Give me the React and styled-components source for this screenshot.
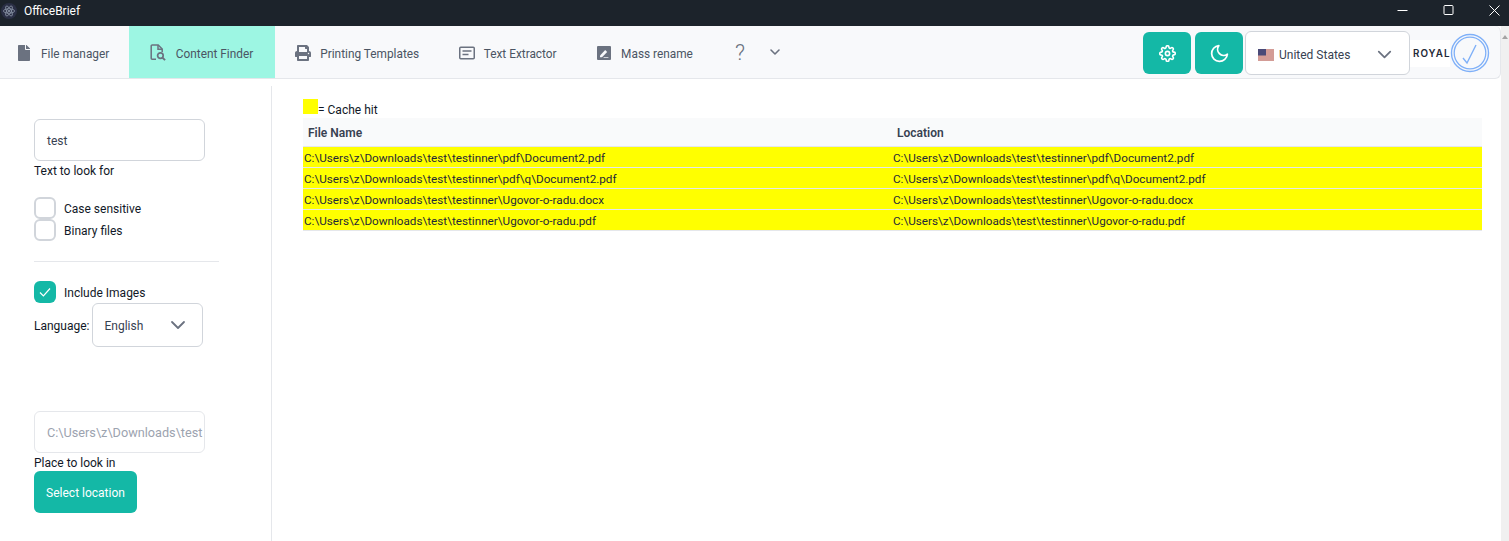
import React from 'react';
import styled, { createGlobalStyle } from 'styled-components';
import { FaFile, FaPrint } from 'react-icons/fa';
import { FiSettings, FiMoon, FiChevronDown } from 'react-icons/fi';

const TABS = [
  { key: 'files', label: 'File manager', icon: <FileIcon /> },
  { key: 'finder', label: 'Content Finder', icon: <FinderIcon />, active: true },
  { key: 'print', label: 'Printing Templates', icon: <FaPrint size={16} /> },
  { key: 'extract', label: 'Text Extractor', icon: <ExtractIcon /> },
  { key: 'rename', label: 'Mass rename', icon: <RenameIcon /> },
];

const FILES = [
  'C:\\Users\\z\\Downloads\\test\\testinner\\pdf\\Document2.pdf',
  'C:\\Users\\z\\Downloads\\test\\testinner\\pdf\\q\\Document2.pdf',
  'C:\\Users\\z\\Downloads\\test\\testinner\\Ugovor-o-radu.docx',
  'C:\\Users\\z\\Downloads\\test\\testinner\\Ugovor-o-radu.pdf',
];

function FileIcon() {
  return <FaFile size={16} />;
}

function FinderIcon() {
  return (
    <svg width="17" height="17" viewBox="0 0 17 17" fill="none" stroke="currentColor" strokeWidth="1.5">
      <path d="M6 15.2H2.2a1 1 0 0 1-1-1V2a1 1 0 0 1 1-1h6l4 4v3" />
      <path d="M8 1v4.2h4.2" />
      <circle cx="10.4" cy="11.6" r="2.8" strokeWidth="1.7" />
      <path d="M12.5 13.7l2.6 2.4" strokeWidth="1.9" />
    </svg>
  );
}

function ExtractIcon() {
  return (
    <svg width="16" height="14" viewBox="0 0 16 14" fill="none" stroke="currentColor">
      <rect x="0.75" y="1.25" width="14.5" height="11.5" rx="1" strokeWidth="1.5" />
      <path d="M3.5 5h9M3.5 8.5h6" strokeWidth="1.5" />
    </svg>
  );
}

function RenameIcon() {
  return (
    <svg width="14" height="14" viewBox="0 0 14 14">
      <rect width="14" height="14" rx="1" fill="currentColor" />
      <path d="M3 9.4L8.2 4l2 2-5.2 5.3H3z" fill="#f8f9fb" />
      <path d="M6.6 11.3H11.4v.7H6.6z" fill="#f8f9fb" />
    </svg>
  );
}

function Flag() {
  return (
    <svg width="16" height="12" viewBox="0 0 16 12">
      <rect width="16" height="12" fill="#f1e4df" />
      <path d="M0 1h16M0 3h16M0 5h16M0 7h16M0 9h16M0 11h16" stroke="#b5544f" strokeWidth="1" />
      <rect width="8" height="6.5" fill="#4a4a78" />
    </svg>
  );
}

function ElectronLogo() {
  return (
    <svg width="16" height="16" viewBox="0 0 16 16" fill="none" stroke="#98a4b4" strokeWidth="0.7">
      <circle cx="8" cy="8" r="8" fill="#2a2f45" stroke="none" />
      <ellipse cx="8" cy="8" rx="5.6" ry="2.2" />
      <ellipse cx="8" cy="8" rx="5.6" ry="2.2" transform="rotate(60 8 8)" />
      <ellipse cx="8" cy="8" rx="5.6" ry="2.2" transform="rotate(120 8 8)" />
      <circle cx="8" cy="8" r="1" fill="#98a4b4" stroke="none" />
    </svg>
  );
}

function RoyalBadge() {
  return (
    <svg width="40" height="40" viewBox="0 0 40 40" fill="none" stroke="#7fb0f8">
      <circle cx="20" cy="20" r="18.5" strokeWidth="1.4" />
      <circle cx="20" cy="20" r="15.8" strokeWidth="1.3" />
      <path d="M13 25l4 5 9-18" strokeWidth="1.4" />
    </svg>
  );
}

const App = () => {
  return (
    <Page>
      <GlobalStyle />
      <TitleBar>
        <TitleLeft>
          <ElectronLogo />
          <span>OfficeBrief</span>
        </TitleLeft>
        <WindowControls>
          <svg aria-label="Minimize" width="11" height="11" viewBox="0 0 11 11" stroke="#fff"><path d="M0.5 5.5h10" /></svg>
          <svg aria-label="Maximize" width="11" height="11" viewBox="0 0 11 11" fill="none" stroke="#fff"><rect x="1" y="0.5" width="9" height="9" rx="1" /></svg>
          <svg aria-label="Close" width="11" height="11" viewBox="0 0 11 11" stroke="#fff"><path d="M0.5 0.5l10 10M10.5 0.5l-10 10" /></svg>
        </WindowControls>
      </TitleBar>

      <Body>
        <Main>
          <NavBar>
            <Tabs>
              {TABS.map(tab => (
                <Tab key={tab.key} $active={tab.active}>
                  <TabIcon>{tab.icon}</TabIcon>
                  {tab.label}
                </Tab>
              ))}
              <HelpMark>?</HelpMark>
              <MoreButton>
                <FiChevronDown size={16} strokeWidth={2.4} />
              </MoreButton>
            </Tabs>
            <NavRight>
              <ActionButton aria-label="Settings">
                <FiSettings size={17} strokeWidth={2.3} />
              </ActionButton>
              <ActionButton aria-label="Dark mode">
                <FiMoon size={21} strokeWidth={2} />
              </ActionButton>
              <CountrySelect>
                <Flag />
                <CountryName>United States</CountryName>
                <FiChevronDown size={23} color="#6b7280" strokeWidth={1.8} />
              </CountrySelect>
              <Brand>
                <BrandName>ROYAL</BrandName>
                <RoyalBadge />
              </Brand>
            </NavRight>
          </NavBar>

          <Content>
            <Sidebar>
              <Field>
                <TextInput>test</TextInput>
                <FieldLabel>Text to look for</FieldLabel>
              </Field>

              <CheckGroup>
                <CheckRow>
                  <Checkbox />
                  <CheckLabel>Case sensitive</CheckLabel>
                </CheckRow>
                <CheckRow>
                  <Checkbox />
                  <CheckLabel>Binary files</CheckLabel>
                </CheckRow>
              </CheckGroup>

              <Divider />

              <CheckRow>
                <Checkbox $checked>
                  <svg width="14" height="14" viewBox="0 0 14 14" fill="none" stroke="#fff" strokeWidth="1.2">
                    <path d="M2 7.5l3.4 3.4L12 3.5" />
                  </svg>
                </Checkbox>
                <CheckLabel>Include Images</CheckLabel>
              </CheckRow>
              <LanguageRow>
                <CheckLabel>Language:</CheckLabel>
                <LanguageSelect>
                  <CheckLabel>English</CheckLabel>
                  <FiChevronDown size={24} color="#6b7280" strokeWidth={1.8} />
                </LanguageSelect>
              </LanguageRow>

              <PlaceField>
                <TextInput $disabled>C:\Users\z\Downloads\test</TextInput>
                <FieldLabel>Place to look in</FieldLabel>
                <SelectButton>Select location</SelectButton>
              </PlaceField>
            </Sidebar>

            <Results>
              <Legend>
                <Swatch />
                <span>= Cache hit</span>
              </Legend>
              <Table>
                <thead>
                  <tr>
                    <HeadCell $wide>File Name</HeadCell>
                    <HeadCell>Location</HeadCell>
                  </tr>
                </thead>
                <tbody>
                  {FILES.map(file => (
                    <tr key={file}>
                      <Cell>{file}</Cell>
                      <Cell>{file}</Cell>
                    </tr>
                  ))}
                </tbody>
              </Table>
            </Results>
          </Content>
        </Main>
        <Scrollbar>
          <ScrollArrow />
        </Scrollbar>
      </Body>
    </Page>
  );
};

export default App;

const GlobalStyle = createGlobalStyle`
  html, body {
    margin: 0;
    height: 100%;
    overflow: hidden;
    background: #fff;
  }
  body {
    font-family: Roboto, 'Noto Sans', sans-serif;
    font-size: 12px;
    color: #111827;
  }
  #root {
    height: 100%;
  }
`;

const Page = styled.div`
  display: flex;
  flex-direction: column;
  height: 541px;
`;

const TitleBar = styled.div`
  display: flex;
  align-items: center;
  justify-content: space-between;
  flex: 0 0 26px;
  box-sizing: border-box;
  padding-bottom: 5px;
  background: #1c232b;
  color: #fff;
`;

const TitleLeft = styled.div`
  display: flex;
  align-items: center;
  gap: 7px;
  padding-left: 1px;
`;

const WindowControls = styled.div`
  display: flex;
  align-items: center;
  gap: 35px;
  padding-right: 9px;
`;

const Body = styled.div`
  display: flex;
  flex: 1;
  min-height: 0;
`;

const Main = styled.div`
  display: flex;
  flex-direction: column;
  flex: 1;
  min-width: 0;
`;

const NavBar = styled.div`
  display: flex;
  justify-content: space-between;
  height: 53px;
  box-sizing: border-box;
  background: #f8f9fb;
  border: 1px solid #e5e7eb;
  border-width: 0 1px 1px 0;
  border-bottom-right-radius: 6px;
  border-top-right-radius: 6px;
`;

const Tabs = styled.div`
  display: flex;
  align-items: stretch;
`;

const Tab = styled.div`
  display: flex;
  align-items: center;
  gap: 9px;
  padding: 3px ${props => (props.$active ? '21.5px' : '19px')} 0 20.5px;
  font-size: 11.85px;
  color: #4b5563;
  white-space: nowrap;
  background: ${props => (props.$active ? '#9df6e3' : 'transparent')};

  &:first-child {
    padding-left: 16px;
    padding-right: 20px;
  }
`;

const TabIcon = styled.span`
  display: flex;
  align-items: center;
  justify-content: center;
  min-width: 16px;
  margin-top: -2px;
  color: #6b7280;
`;

const HelpMark = styled.div`
  display: flex;
  align-items: center;
  margin-left: 23px;
  font-size: 22px;
  font-weight: 300;
  color: #6b7280;
`;

const MoreButton = styled.div`
  display: flex;
  align-items: center;
  margin-left: 22px;
  color: #6b7280;
`;

const NavRight = styled.div`
  display: flex;
  align-items: center;
  gap: 4px;
  padding: 2px 10px 0 0;
`;

const ActionButton = styled.div`
  display: flex;
  align-items: center;
  justify-content: center;
  width: 48px;
  height: 42px;
  border-radius: 6px;
  background: #14b8a6;
  color: #fff;
`;

const CountrySelect = styled.div`
  display: flex;
  align-items: center;
  width: 165px;
  height: 44px;
  margin-left: -2px;
  padding: 3px 13px 0 12px;
  box-sizing: border-box;
  background: #fff;
  border: 1px solid #d1d5db;
  border-radius: 6px;
`;

const CountryName = styled.span`
  flex: 1;
  margin-left: 5px;
  color: #374151;
`;

const Brand = styled.div`
  display: flex;
  align-items: center;
  margin-left: -4px;
`;

const BrandName = styled.span`
  display: flex;
  align-items: center;
  box-sizing: border-box;
  width: 40px;
  height: 27px;
  padding-left: 3px;
  background: #fff;
  font-family: Inter, 'Liberation Sans', sans-serif;
  font-size: 9.8px;
  font-weight: 600;
  letter-spacing: 1px;
  color: #1f2937;
`;

const Scrollbar = styled.div`
  flex: 0 0 8px;
  display: flex;
  justify-content: center;
  padding-top: 9px;
  background: #f0f0f0;
`;

const ScrollArrow = styled.div`
  width: 0;
  height: 0;
  border-left: 3px solid transparent;
  border-right: 3px solid transparent;
  border-bottom: 4px solid #a3a3a3;
`;

const Content = styled.div`
  display: flex;
  flex: 1;
  min-height: 0;
  padding-top: 7px;
`;

const Sidebar = styled.div`
  display: flex;
  flex-direction: column;
  align-items: flex-start;
  flex: 0 0 272px;
  box-sizing: border-box;
  padding: 33px 0 0 34px;
  border-right: 1px solid #e5e7eb;
`;

const Field = styled.div`
  display: flex;
  flex-direction: column;
  align-items: flex-start;
`;

const TextInput = styled.div`
  display: flex;
  align-items: center;
  width: 171px;
  height: 42px;
  box-sizing: border-box;
  padding: ${props => (props.$disabled ? '0' : '2px')} 12px 0;
  background: #fff;
  border: 1px solid ${props => (props.$disabled ? '#e5e7eb' : '#d1d5db')};
  border-radius: 6px;
  font-size: ${props => (props.$disabled ? '12.7px' : '12px')};
  white-space: nowrap;
  color: ${props => (props.$disabled ? '#9ca3af' : '#374151')};
`;

const FieldLabel = styled.label`
  margin-top: 2px;
  line-height: 16px;
`;

const CheckGroup = styled.div`
  display: flex;
  flex-direction: column;
  margin-top: 18px;
`;

const CheckRow = styled.div`
  display: flex;
  align-items: center;
  gap: 8px;
  height: 22px;
`;

const CheckLabel = styled.span`
  padding-top: 2px;
`;

const Checkbox = styled.span`
  display: flex;
  align-items: center;
  justify-content: center;
  width: 22px;
  height: 22px;
  box-sizing: border-box;
  border: ${props => (props.$checked ? 'none' : '2px solid #d1d5db')};
  border-radius: 6px;
  background: ${props => (props.$checked ? '#14b8a6' : '#fff')};
`;

const Divider = styled.hr`
  align-self: stretch;
  width: 185px;
  margin: 20px 0 19px;
  border: 0;
  border-top: 1px solid #e5e7eb;
`;

const LanguageRow = styled.div`
  display: flex;
  align-items: center;
  gap: 2px;
`;

const LanguageSelect = styled.div`
  display: flex;
  align-items: center;
  justify-content: space-between;
  width: 111px;
  height: 44px;
  box-sizing: border-box;
  padding: 0 12px 0 12px;
  border: 1px solid #d1d5db;
  border-radius: 6px;
  color: #374151;
`;

const PlaceField = styled(Field)`
  margin-top: 64px;
`;

const SelectButton = styled.div`
  display: flex;
  align-items: center;
  justify-content: center;
  width: 103px;
  height: 42px;
  box-sizing: border-box;
  padding-top: 2px;
  border-radius: 6px;
  background: #14b8a6;
  color: #fff;
`;

const Results = styled.div`
  flex: 1;
  min-width: 0;
  padding: 13px 19px 0 31px;
`;

const Legend = styled.div`
  display: flex;
  align-items: flex-end;
  height: 19px;
  line-height: 15px;
`;

const Swatch = styled.span`
  align-self: flex-start;
  width: 15px;
  height: 15px;
  background: #ff0;
`;

const Table = styled.table`
  width: 100%;
  table-layout: fixed;
  border-collapse: separate;
  border-spacing: 0;
`;

const HeadCell = styled.th`
  ${props => props.$wide && 'width: 589px;'}
  height: 29px;
  padding: 2px 5px 0;
  box-sizing: border-box;
  background: #f9fafb;
  border-bottom: 1px solid #e5e7eb;
  color: #374151;
  font-weight: 600;
  text-align: left;
`;

const Cell = styled.td`
  height: 21px;
  padding: 1px 1px 0;
  box-sizing: border-box;
  background: #ff0;
  border-bottom: 1px solid #e5e7eb;
  font-size: 11.7px;
  color: #1f2937;
`;
